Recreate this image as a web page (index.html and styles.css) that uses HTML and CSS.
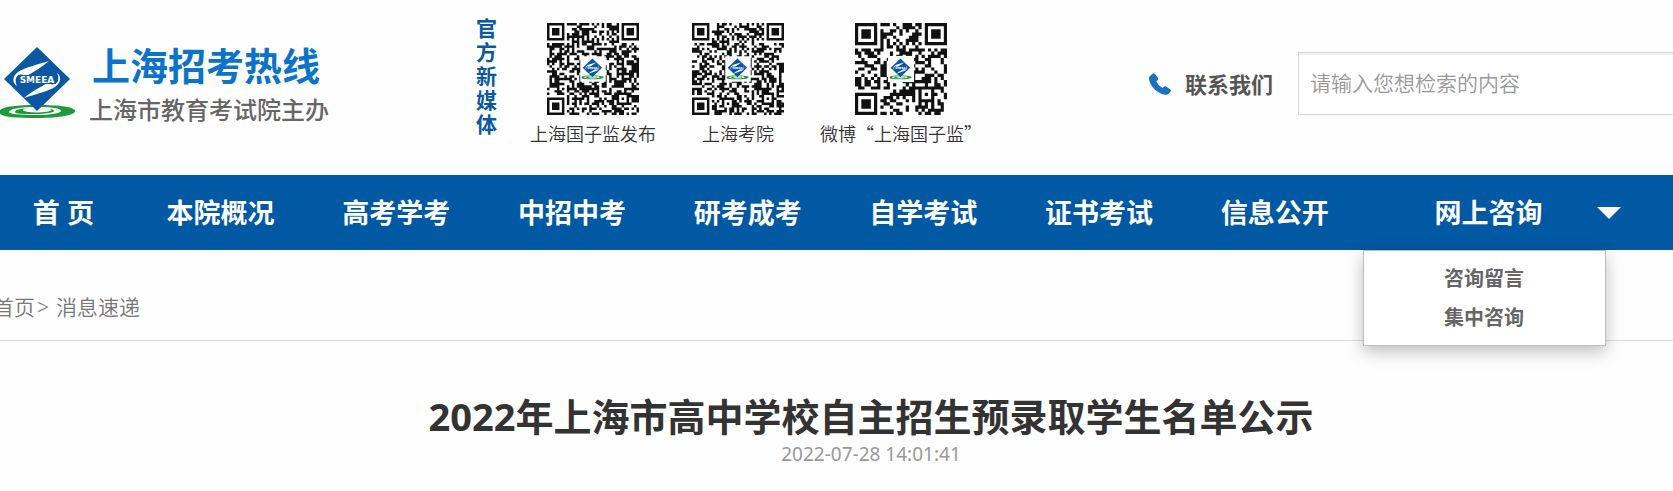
FILE: index.html
```html
<!DOCTYPE html>
<html lang="zh-CN">
<head>
<meta charset="utf-8">
<meta name="viewport" content="width=device-width, initial-scale=1">
<title>上海招考热线</title>
<link rel="stylesheet" href="styles.css">
</head>
<body>
<svg class="defs" width="0" height="0" aria-hidden="true">
  <symbol id="emblem" viewBox="0 0 78 74">
    <path d="M-1 66C-1 61 14 59 37 59s38 2 38 6-15 7-38 7S-1 71-1 66Z" fill="#1d9b3b"/>
    <path d="M9 66c0-3 10-5 28-5s24 2 24 4-10 4-26 4-26-1-26-3Z" fill="#fff"/>
    <path d="M15 66c0-3 8-4 22-4s17 2 17 3-7 3-19 3-20 0-20-2Z" fill="#1d9b3b"/>
    <ellipse cx="37" cy="64" rx="14" ry="2.400" fill="#fff"/>
    <path d="M37 1 70 33 37 65 4 33Z" fill="#0b57a4"/>
    <path d="M49 15C38 18 24 22 18 26c-6 4-6 11-1 14-2-5-2-9 2-11 4-1 5 0 6 2 8-5 16-9 24-16ZM24 52c12-4 25-7 31-11 6-4 7-11 2-14 2 5 2 9-2 11-4 1-5 0-6-2-8 5-17 9-25 16Z" fill="#fff"/>
    <path d="M18 29h38v9H18z" fill="#0b57a4"/>
    <text x="37" y="37" text-anchor="middle" class="emblem-text">SMEEA</text>
  </symbol>
</svg>

<header class="header">
  <a class="brand" href="#">
    <svg class="brand-emblem" viewBox="0 0 78 74" aria-hidden="true"><use href="#emblem"/></svg>
    <span class="brand-words">
      <span class="brand-name">上海招考热线</span>
      <span class="brand-host">上海市教育考试院主办</span>
    </span>
  </a>
  <section class="media">
    <h2 class="media-title">官方新媒体</h2>
    <figure class="qr">
      <svg class="qr-code" data-size="37" data-seed="11" aria-hidden="true"></svg>
      <figcaption>上海国子监发布</figcaption>
    </figure>
    <figure class="qr">
      <svg class="qr-code" data-size="37" data-seed="29" aria-hidden="true"></svg>
      <figcaption>上海考院</figcaption>
    </figure>
    <figure class="qr">
      <svg class="qr-code" data-size="29" data-seed="47" aria-hidden="true"></svg>
      <figcaption>微博“上海国子监”</figcaption>
    </figure>
  </section>
  <a class="contact" href="#">
    <svg class="contact-icon" viewBox="0 0 22 22" aria-hidden="true"><path d="M1 3 4 .5Q5 0 6 1L9 5q.7 1-.2 2L7.300 8.500Q9 12.500 13.500 15L15 13.600q1-.8 2-.2l4.400 3q.9.8.3 1.800L19.500 21q-1 1-3 .8C8 21 0 12 0 5Q0 4 1 3Z" fill="#1671bf"/></svg>
    <span>联系我们</span>
  </a>
  <form class="search" role="search">
    <input class="search-input" type="text" aria-label="检索" placeholder="请输入您想检索的内容">
  </form>
</header>

<nav class="nav">
  <ul class="nav-list">
    <li class="nav-home"><a href="#">首 页</a></li>
    <li><a href="#">本院概况</a></li>
    <li><a href="#">高考学考</a></li>
    <li><a href="#">中招中考</a></li>
    <li><a href="#">研考成考</a></li>
    <li><a href="#">自学考试</a></li>
    <li><a href="#">证书考试</a></li>
    <li><a href="#">信息公开</a></li>
    <li class="nav-open">
      <a href="#">网上咨询</a>
      <svg class="caret" viewBox="0 0 24 12" aria-hidden="true"><path d="M0 0h24L12 12Z" fill="#fff"/></svg>
      <ul class="submenu">
        <li><a href="#">咨询留言</a></li>
        <li><a href="#">集中咨询</a></li>
      </ul>
    </li>
  </ul>
</nav>

<main>
  <div class="crumbs"><a href="#">首页</a><span class="crumbs-mark">&gt;</span><a href="#">消息速递</a></div>
  <article class="article">
    <h1 class="article-title">2022年上海市高中学校自主招生预录取学生名单公示</h1>
    <time class="article-date" datetime="2022-07-28T14:01:41">2022-07-28 14:01:41</time>
  </article>
</main>
<script src="qr.js"></script>
</body>
</html>
```
FILE: styles.css
```css
* {
  box-sizing: border-box;
}

body {
  margin: 0;
  background: #fefefe;
  color: #333;
  font-family: "Noto Sans", "Noto Sans CJK SC", sans-serif;
  overflow-x: hidden;
}

a {
  color: inherit;
  text-decoration: none;
}

ul {
  list-style: none;
  margin: 0;
  padding: 0;
}

.defs {
  position: absolute;
}

.header {
  display: flex;
  align-items: flex-start;
  height: 175px;
}

.brand {
  display: flex;
  flex: none;
  width: 476px;
  padding-top: 46px;
}

.brand-emblem {
  width: 78px;
  height: 74px;
  margin-right: 11px;
}

.emblem-text {
  font: bold 9px "DejaVu Sans", sans-serif;
  fill: #fff;
}

.brand-words {
  display: flex;
  flex-direction: column;
}

.brand-name {
  padding-left: 3px;
  font-size: 38px;
  line-height: 38px;
  font-weight: 700;
  color: #0b74c8;
}

.brand-host {
  margin-top: 14px;
  font-size: 24px;
  line-height: 24px;
  font-weight: 500;
  color: #666;
}

.media {
  display: flex;
  flex: none;
  gap: 36px;
  padding-top: 16px;
}

.media-title {
  width: 21px;
  margin: 0 -3px 0 0;
  font-size: 21px;
  line-height: 24px;
  color: #0b5a9f;
}

.qr {
  display: flex;
  flex-direction: column;
  align-items: center;
  margin: 0;
  padding-top: 7px;
  font-family: "Noto Sans CJK SC", sans-serif;
  font-size: 18px;
  line-height: 24px;
  font-weight: 350;
}

.qr-code {
  width: 92px;
  height: 92px;
  margin-bottom: 6px;
}

.contact {
  display: flex;
  flex: none;
  align-items: center;
  gap: 14px;
  margin-left: auto;
  padding: 68px 25px 0 0;
  font-size: 22px;
  line-height: 32px;
  font-weight: 700;
  color: #555;
}

.contact-icon {
  width: 22px;
  height: 22px;
}

.search {
  flex: none;
  width: 375px;
  padding-top: 52px;
}

.search-input {
  display: block;
  width: 100%;
  height: 63px;
  padding: 0 11px 4px;
  border: 1px solid #d9d9d9;
  border-right: 0;
  background: #fff;
  box-shadow: inset 0 2px 1px #eee;
  font: 350 21px "Noto Sans CJK SC", sans-serif;
}

.search-input::placeholder {
  color: #999;
}

.nav {
  background: #0059a2;
  color: #fff;
  font-size: 27px;
  font-weight: 700;
}

.nav-list {
  display: grid;
  grid-template-columns: 133fr repeat(7, 176fr) 311fr;
  line-height: 75px;
  text-align: center;
}

.nav-home {
  padding-right: 6px;
}

.nav-open {
  display: flex;
  align-items: center;
  gap: 54px;
  padding-left: 72px;
  position: relative;
}

.caret {
  width: 24px;
  height: 12px;
}

.submenu {
  position: absolute;
  top: 100%;
  left: 0;
  width: 243px;
  padding: 8px 0;
  border: 1px solid #bbb;
  background: #fff;
  box-shadow: 0 6px 16px rgba(0, 0, 0, 0.25);
  color: #666;
  font-size: 20px;
  line-height: 39px;
}

.crumbs {
  margin-left: -7px;
  padding: 42px 0 17px;
  border-bottom: 1px solid #ddd;
  color: #777;
  font-size: 21px;
  line-height: 31px;
  font-weight: 350;
}

.crumbs-mark {
  margin: 0 7px 0 2px;
}

.article {
  padding: 48px 0 20px 69px;
  text-align: center;
}

.article-title {
  margin: 0;
  font-size: 38px;
  line-height: 54px;
}

.article-date {
  display: block;
  font-size: 19px;
  line-height: 22px;
  color: #999;
}
```
FILE: qr.js
```js
// Fills each .qr-code with a module grid: finders, timing, alignment, data and the centre emblem.
function finder(x, y) {
  return `M${x} ${y}h7v7h-7zM${x + 1} ${y + 1}v5h5v-5zM${x + 2} ${y + 2}h3v3h-3z`;
}

document.querySelectorAll(".qr-code").forEach((svg) => {
  const n = Number(svg.dataset.size);
  let state = Number(svg.dataset.seed) * 7919;
  const next = () => {
    state = (state * 1103515245 + 12345) % 2147483648;
    return state / 2147483648;
  };
  const a = n - 7;
  let d = finder(0, 0) + finder(n - 7, 0) + finder(0, n - 7);
  for (let y = 0; y < n; y++) {
    for (let x = 0; x < n; x++) {
      const dark = next() < 0.52;
      const corner = (x < 8 && y < 8) || (x > n - 9 && y < 8) || (x < 8 && y > n - 9);
      if (corner) continue;
      const ring = Math.max(Math.abs(x - a), Math.abs(y - a));
      let on = dark;
      if (x === 6 || y === 6) on = (x + y) % 2 === 0;
      if (ring <= 2) on = ring !== 1;
      if (on) d += `M${x} ${y}h1v1h-1z`;
    }
  }
  const w = n * 0.25;
  const o = (n - w) / 2;
  svg.setAttribute("viewBox", `0 0 ${n} ${n}`);
  svg.innerHTML =
    `<path d="${d}" fill="#111"/>` +
    `<rect x="${o - 0.5}" y="${o - 0.5}" width="${w + 1}" height="${w + 1}" fill="#fff"/>` +
    `<use href="#emblem" x="${o}" y="${o}" width="${w}" height="${w}"/>`;
});
```
